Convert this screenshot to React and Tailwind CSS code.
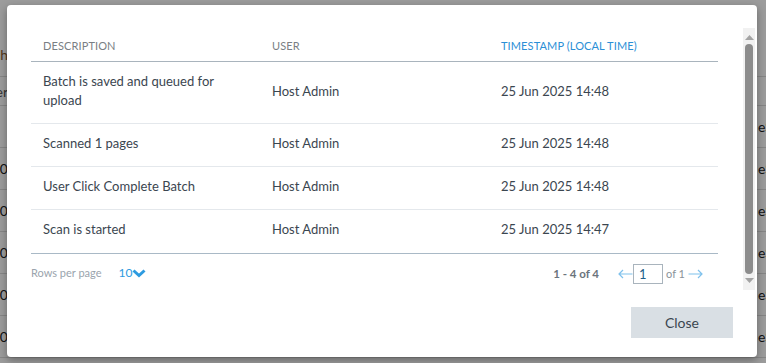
import React from "react";

const rows = [
  { desc: "Batch is saved and queued for upload", user: "Host Admin", time: "25 Jun 2025 14:48" },
  { desc: "Scanned 1 pages", user: "Host Admin", time: "25 Jun 2025 14:48" },
  { desc: "User Click Complete Batch", user: "Host Admin", time: "25 Jun 2025 14:48" },
  { desc: "Scan is started", user: "Host Admin", time: "25 Jun 2025 14:47" },
];

// page behind the dialog, only edges peek out
const bgRows = [
  { h: "h-[77px]", left: "Batch", leftColor: "text-[#8a5a2b]", right: "", align: "items-end pb-[11px]" },
  { h: "h-[29px]", left: "User", leftColor: "text-[#555]", right: "", align: "items-center" },
  { h: "h-[42px]", left: "", right: "eSign" },
  { h: "h-[42px]", left: "10", right: "eSign" },
  { h: "h-[42px]", left: "10", right: "eSign" },
  { h: "h-[42px]", left: "10", right: "eSign" },
  { h: "h-[42px]", left: "10", right: "eSign" },
  { h: "h-[42px]", left: "10", right: "eSign" },
];

function LongArrow({ dir = "left" }) {
  return (
    <svg width="15" height="10" viewBox="0 0 15 10" className="text-[#7fc1ec]">
      {dir === "left" ? (
        <path d="M14.5 5H1M5 1L1 5l4 4" fill="none" stroke="currentColor" strokeWidth="1.2" />
      ) : (
        <path d="M0.5 5H14M10 1l4 4-4 4" fill="none" stroke="currentColor" strokeWidth="1.2" />
      )}
    </svg>
  );
}

function Chevron() {
  return (
    <svg width="14" height="10" viewBox="0 0 14 10" className="text-[#2d9be0]">
      <path d="M1.5 2.5L7 7.5l5.5-5" fill="none" stroke="currentColor" strokeWidth="3" />
    </svg>
  );
}

function Tri({ up }) {
  return (
    <svg width="9" height="5" viewBox="0 0 9 5" className="text-[#a3a3a3]">
      <path d={up ? "M0 5L4.5 0 9 5z" : "M0 0h9L4.5 5z"} fill="currentColor" />
    </svg>
  );
}

export default function App() {
  return (
    <div
      className="relative w-[766px] h-[363px] overflow-hidden bg-white"
      style={{ fontFamily: "Lato, 'Liberation Sans', sans-serif" }}
    >
      {/* background page */}
      <div className="flex flex-col text-[14px] text-[#222]">
        {bgRows.map((r, i) => (
          <div key={i} className={`${r.h} flex justify-between border-b border-[#dcdcdc] ${r.align || "items-center"}`}>
            <div className="w-[8px] overflow-hidden flex justify-end">
              <span className={r.leftColor || ""}>{r.left}</span>
            </div>
            <div className="w-[8px] overflow-hidden">
              <span>{r.right}</span>
            </div>
          </div>
        ))}
      </div>

      {/* dim overlay */}
      <div className="absolute inset-0 bg-black/[0.39]" />

      {/* dialog */}
      <div className="absolute left-[7px] top-[5px] w-[750px] h-[352px] bg-white rounded-[4px] shadow-[0_3px_8px_rgba(0,0,0,0.35)] flex flex-col pt-[23px]">
        <div className="flex">
          <div className="w-[736px] pl-6 pr-[25px]">
            <table className="w-[687px] table-fixed border-collapse">
              <thead>
                <tr className="border-b border-[#a9b4bd]">
                  <th className="pl-3 pt-[10px] pb-[8px] text-left text-[11px] font-normal leading-[15px] text-[#7a7f84] tracking-[0.01em]">DESCRIPTION</th>
                  <th className="pl-3 pt-[10px] pb-[8px] text-left text-[11px] font-normal leading-[15px] text-[#7a7f84] tracking-[0.01em]">USER</th>
                  <th className="pl-3 pt-[10px] pb-[8px] text-left text-[11px] font-normal leading-[15px] text-[#2b8fd6] tracking-[0.01em]">TIMESTAMP (LOCAL TIME)</th>
                </tr>
              </thead>
              <tbody>
                {rows.map((r, i) => {
                  const last = i === rows.length - 1;
                  const cell = `pl-3 pt-[10px] ${last ? "pb-[14px]" : "pb-[13px]"} text-[13px] leading-[19px] text-[#3b4650] align-middle`;
                  return (
                    <tr key={i} className={`border-b ${last ? "border-[#a9b9c6]" : "border-[#e4e8ec]"}`}>
                      <td className={`${cell} pr-3`}>{r.desc}</td>
                      <td className={cell}>{r.user}</td>
                      <td className={cell}>{r.time}</td>
                    </tr>
                  );
                })}
              </tbody>
            </table>

            <div className="flex items-center justify-between pt-[10px] pb-[5px] pr-[15px]">
              <div className="flex items-center text-[11px] -mt-[2px]">
                <span className="text-[#9aa4ad]">Rows per page</span>
                <span className="ml-[17px] text-[12px] text-[#2d9be0]">10</span>
                <Chevron />
              </div>
              <div className="flex items-center text-[11px]">
                <span className="text-[11.5px] font-bold text-[#6b747c] mr-[19px]">1 - 4 of 4</span>
                <LongArrow dir="left" />
                <div className="w-[30px] h-[20px] border border-[#a9b4bd] text-[13px] leading-[18px] text-[#1f5f8b] pl-[5px]">1</div>
                <span className="ml-[3px] mr-[3px] text-[#8a9299]">of 1</span>
                <LongArrow dir="right" />
              </div>
            </div>
          </div>

          {/* scrollbar */}
          <div className="w-[12px] h-[262px] bg-[#f1f1f1] flex flex-col items-center justify-between py-[7px]">
            <Tri up />
            <div className="w-[8px] flex-1 my-[4px] rounded-full bg-[#8c8c8c]" />
            <Tri />
          </div>
        </div>

        <div className="flex justify-end pr-6 pt-[17px]">
          <button className="w-[102px] h-[31px] bg-[#d9dfe4] text-[14px] text-[#3b4650]">Close</button>
        </div>
      </div>
    </div>
  );
}
